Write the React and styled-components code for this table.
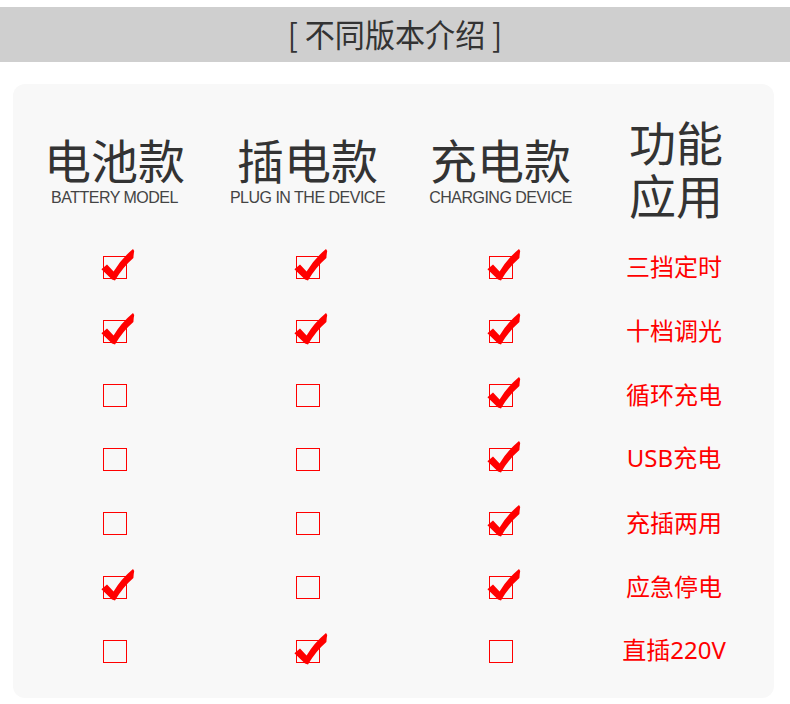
import React from 'react';
import styled, { createGlobalStyle } from 'styled-components';

const GlobalStyle = createGlobalStyle`
  html, body {
    margin: 0;
    padding: 0;
    background: #fff;
  }
  body {
    font-family: "Noto Sans CJK SC", "Liberation Sans", sans-serif;
  }
`;

const Page = styled.div`
  width: 790px;
  height: 704px;
  padding-top: 7px;
  box-sizing: border-box;
  background: #fff;
`;

const Band = styled.div`
  height: 55px;
  background: #cfcfcf;
  display: flex;
  justify-content: center;
  align-items: center;
`;

const Title = styled.h1`
  margin: 0 0 4px;
  font-size: 32px;
  font-weight: 400;
  line-height: 1;
  color: #333;
  transform: scaleX(0.94);
`;

const Card = styled.div`
  margin: 22px 16px 0 13px;
  height: 614px;
  background: #f8f8f8;
  border-radius: 12px;
  box-sizing: border-box;
  padding: 30px 19px 15px 5px;
`;

const Grid = styled.div`
  display: grid;
  grid-template-columns: 193px 193px 193px 1fr;
`;

const HeadRow = styled(Grid)`
  align-items: end;
  padding-bottom: 14px;
`;

const HeadCell = styled.div`
  display: flex;
  flex-direction: column;
  align-items: center;
  margin-bottom: ${p => (p.$sub ? '13px' : '0')};
`;

const HeadCn = styled.div`
  font-size: 47px;
  line-height: ${p => (p.$tall ? '53px' : '46px')};
  color: #333;
  text-align: center;
`;

const HeadEn = styled.div`
  font-family: "Liberation Sans", Arial, sans-serif;
  font-size: 16px;
  line-height: 18px;
  margin-top: 7px;
  color: #444;
  letter-spacing: -0.5px;
  white-space: nowrap;
`;

const Row = styled(Grid)`
  height: 64px;
  align-items: center;
`;

const Cell = styled.div`
  display: flex;
  justify-content: center;
  align-items: center;
`;

const Box = styled.div`
  position: relative;
  width: 24px;
  height: 23px;
  box-sizing: border-box;
  border: 1px solid #f00;
  margin-top: 2px;
`;

const Tick = styled.svg`
  position: absolute;
  left: -5px;
  top: -10px;
  width: 38px;
  height: 36px;
  overflow: visible;
`;

const Feature = styled.div`
  font-size: 24px;
  color: #f00;
  text-align: center;
  line-height: 1;
  padding-right: 4px;
  white-space: nowrap;
  font-family: ${p => (p.$latin ? '"Noto Sans", "Noto Sans CJK SC", sans-serif' : '"Noto Sans CJK SC", sans-serif')};
`;

const Check = ({ on }) => (
  <Box>
    {on && (
      <Tick viewBox="-5 -10 38 36">
        <path
          d="M -2.6 12.2 L 3 7.6 L 9.6 14.4 Q 17 2 29 -8 L 30.2 -6 Q 29.6 -3 29.4 1 Q 19 10 11 23.4 L 8 22.4 Z"
          fill="#f00"
        />
      </Tick>
    )}
  </Box>
);

const columns = [
  { cn: '电池款', en: 'BATTERY MODEL' },
  { cn: '插电款', en: 'PLUG IN THE DEVICE' },
  { cn: '充电款', en: 'CHARGING DEVICE' },
];

const rows = [
  { name: '三挡定时', v: [1, 1, 1] },
  { name: '十档调光', v: [1, 1, 1] },
  { name: '循环充电', v: [0, 0, 1] },
  { name: 'USB充电', v: [0, 0, 1], latin: true },
  { name: '充插两用', v: [0, 0, 1] },
  { name: '应急停电', v: [1, 0, 1] },
  { name: '直插220V', v: [0, 1, 0], latin: true },
];

export default function App() {
  return (
    <Page>
      <GlobalStyle />
      <Band>
        <Title>[ 不同版本介绍 ]</Title>
      </Band>
      <Card>
        <HeadRow>
          {columns.map(c => (
            <HeadCell key={c.cn} $sub>
              <HeadCn>{c.cn}</HeadCn>
              <HeadEn>{c.en}</HeadEn>
            </HeadCell>
          ))}
          <HeadCell>
            <HeadCn $tall>功能<br />应用</HeadCn>
          </HeadCell>
        </HeadRow>
        {rows.map(r => (
          <Row key={r.name}>
            {r.v.map((on, i) => (
              <Cell key={i}>
                <Check on={!!on} />
              </Cell>
            ))}
            <Cell>
              <Feature $latin={r.latin}>{r.name}</Feature>
            </Cell>
          </Row>
        ))}
      </Card>
    </Page>
  );
}
